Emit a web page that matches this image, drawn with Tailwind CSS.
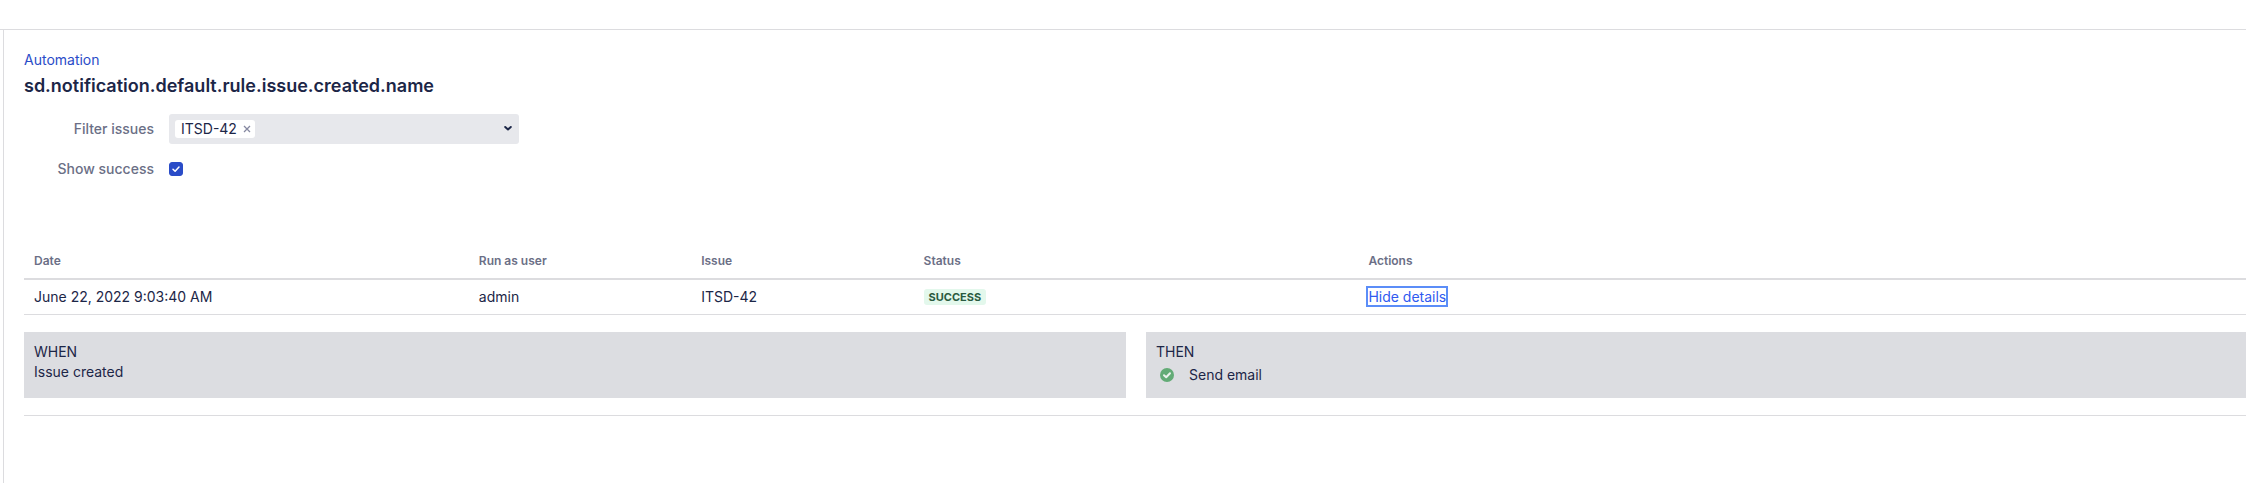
<!DOCTYPE html>
<html lang="en">

<head>
    <meta charset="UTF-8">
    <meta name="viewport" content="width=device-width, initial-scale=1.0">
    <title>Automation | sd.notification.default.rule.issue.created.name</title>
    <script src="https://cdn.jsdelivr.net/npm/@tailwindcss/browser@4"></script>
</head>

<body class="min-h-screen flex flex-col overflow-x-hidden bg-white pt-[29px] font-['Inter','Liberation_Sans',sans-serif] text-sm leading-5 text-[#1C2647]">
    <div class="flex-1 flex flex-col border-t border-[#DCDCDF]">
        <main class="flex-1 ml-[3px] -mr-0.5 border-l border-[#DCDCDF] pl-5 pt-5">
            <!-- Heading -->
            <a href="#" class="block w-fit text-[#2A4CC8] hover:underline">Automation</a>
            <h1 class="mt-1 text-lg leading-6 font-semibold">sd.notification.default.rule.issue.created.name</h1>

            <!-- Filters -->
            <form class="mt-4">
                <div class="flex items-center h-[30px]">
                    <label for="filter-issues" class="w-[130px] text-right font-medium text-[#6B6F86]">Filter issues</label>
                    <div class="ml-[15px] w-[350px] h-[30px] flex items-center bg-[#E7E8EC] rounded-[3px] px-1.5">
                        <span class="h-[18px] flex items-center gap-1.5 bg-white rounded-[3px] pl-1.5 pr-1">ITSD-42
                            <button type="button" aria-label="Remove ITSD-42" class="text-[#8588A0]">
                                <svg class="w-2 h-2" viewBox="0 0 8 8" fill="none" stroke="currentColor" stroke-width="1.3">
                                    <path d="M1 1l6 6M7 1L1 7" />
                                </svg>
                            </button>
                        </span>
                        <input id="filter-issues" type="text" class="flex-1 min-w-0 bg-transparent px-1 outline-none" />
                        <button type="button" aria-label="Show issues">
                            <svg class="w-2.5 h-2.5" viewBox="0 0 10 10" fill="none" stroke="currentColor" stroke-width="2" stroke-linecap="round" stroke-linejoin="round">
                                <path d="M2.2 3L5 5.5 7.8 3" />
                            </svg>
                        </button>
                    </div>
                </div>
                <div class="flex items-center h-[30px] mt-2.5">
                    <label for="show-success" class="w-[130px] text-right font-medium text-[#6B6F86]">Show success</label>
                    <div class="ml-[15px] grid">
                        <input id="show-success" type="checkbox" checked class="peer col-start-1 row-start-1 w-3.5 h-3.5 appearance-none rounded-[3px] border border-[#8590A2] checked:border-[#2A4CC8] checked:bg-[#2A4CC8]" />
                        <svg class="col-start-1 row-start-1 w-3.5 h-3.5 text-white pointer-events-none hidden peer-checked:block" viewBox="0 0 14 14" fill="none" stroke="currentColor" stroke-width="1.5" stroke-linecap="round" stroke-linejoin="round">
                            <path d="M4 7.2l2.1 2.1L10 5" />
                        </svg>
                    </div>
                </div>
            </form>

            <!-- Audit log -->
            <table class="w-full mt-[60px] table-fixed border-collapse text-left">
                <colgroup>
                    <col class="w-1/5">
                    <col class="w-1/10">
                    <col class="w-1/10">
                    <col class="w-1/5">
                    <col class="w-2/5">
                </colgroup>
                <thead class="text-xs leading-5 text-[#6B6F86]">
                    <tr class="border-b-2 border-[#DCDCDF]">
                        <th class="px-2.5 py-[7px] font-semibold">Date</th>
                        <th class="px-2.5 py-[7px] font-semibold">Run as user</th>
                        <th class="px-2.5 py-[7px] font-semibold">Issue</th>
                        <th class="px-2.5 py-[7px] font-semibold">Status</th>
                        <th class="px-2.5 py-[7px] font-semibold">Actions</th>
                    </tr>
                </thead>
                <tbody>
                    <tr class="border-b border-[#DCDCDF]">
                        <td class="px-2.5 py-[7px]">June 22, 2022 9:03:40 AM</td>
                        <td class="px-2.5 py-[7px]">admin</td>
                        <td class="px-2.5 py-[7px]">ITSD-42</td>
                        <td class="px-2.5 py-[7px]">
                            <span class="block w-fit h-4 px-[5px] rounded-[3px] bg-[#E3F8EC] text-[11px] leading-4 font-bold text-[#2A5A40]">SUCCESS</span>
                        </td>
                        <td class="px-2.5 pt-1.5 pb-2">
                            <button type="button" aria-expanded="true" class="block leading-[17px] text-[#2F5AF0] outline-2 outline-[#5B8DF8]">Hide details</button>
                        </td>
                    </tr>
                    <tr class="border-b border-[#DCDCDF]">
                        <td colspan="5" class="py-[17px]">
                            <div class="grid grid-cols-2 gap-5">
                                <section class="bg-[#DCDDE1] p-2.5">
                                    <h2>WHEN</h2>
                                    <p>Issue created</p>
                                </section>
                                <section class="bg-[#DCDDE1] p-2.5">
                                    <h2>THEN</h2>
                                    <div class="flex items-center h-[26px] gap-[11px]">
                                        <svg class="w-[22px] h-[22px]" viewBox="0 0 22 22" fill="none">
                                            <circle cx="11" cy="11" r="7" fill="#62AB76" />
                                            <path d="M8 11.2l2.2 2.1L14 9.2" stroke="#E9F1EC" stroke-width="2" stroke-linecap="round" stroke-linejoin="round" />
                                        </svg>
                                        <span>Send email</span>
                                    </div>
                                </section>
                            </div>
                        </td>
                    </tr>
                </tbody>
            </table>
        </main>
    </div>
</body>

</html>
